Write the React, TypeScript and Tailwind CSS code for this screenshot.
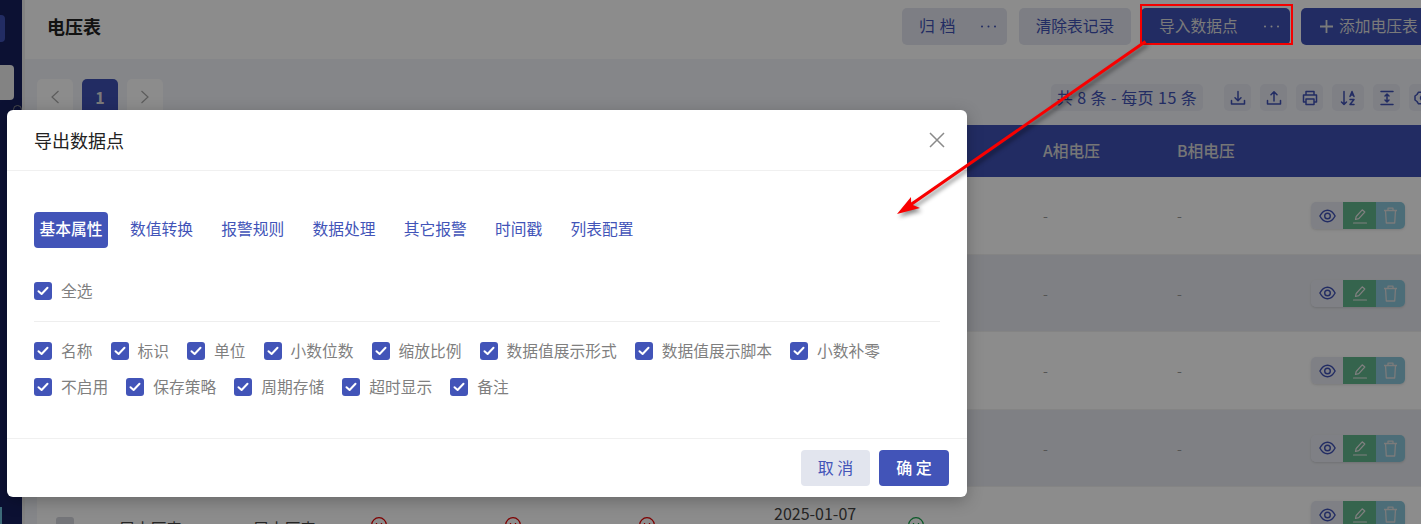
import React from "react";

const font = { fontFamily: '"Noto Sans CJK SC", "Noto Sans", sans-serif' };

const Check = () => (
  <span className="flex h-[18px] w-[18px] shrink-0 items-center justify-center rounded-[3px] bg-[#4254b8]">
    <svg width="12" height="10" viewBox="0 0 12 10" fill="none" stroke="white" strokeWidth="2" strokeLinecap="round" strokeLinejoin="round">
      <path d="M1.5 5.2 4.6 8 10.5 1.8" />
    </svg>
  </span>
);

const Item = ({ label }: { label: string }) => (
  <div className="flex h-[18px] items-center gap-[9px]">
    <Check />
    <span className="text-[15.75px] leading-[16px] whitespace-nowrap text-[#7f7f7f]">{label}</span>
  </div>
);

const Dots = ({ color }: { color: string }) => (
  <svg className="ml-auto mr-[11px] shrink-0" width="15" height="3" viewBox="0 0 15 3" fill={color}>
    <circle cx="1" cy="1.500" r="1" />
    <circle cx="7.500" cy="1.500" r="1" />
    <circle cx="14" cy="1.500" r="1" />
  </svg>
);

const Ico = ({ d }: { d: string }) => (
  <svg width="18" height="18" viewBox="0 0 18 18" fill="none" stroke="#3f51b5" strokeWidth="1.500" strokeLinecap="round" strokeLinejoin="round">
    <path d={d} />
  </svg>
);

const toolIcons = [
  "M9 2.500v9M6 8.800l3 3 3-3M2.500 11.500v3.500h13v-3.500",
  "M9 12V3M6 5.800l3-3 3 3M2.500 11.500v3.500h13v-3.500",
  "M5 6V2.500h8V6M5 13H2.500V6h13v7H13M5 10h8v5.500H5z",
  "M5 2.500v13M2.500 13l2.500 2.500L7.500 13M11 7.500l2-5 2 5M11.700 6h2.600M11 10.500h4L11 15.500h4",
  "M3 2.500h12M3 15.500h12M9 5v8M7 7l2-2 2 2M7 11l2 2 2-2",
  "M9 1.500 11 3.200h2.500L15 5.500l2 1.500v4l-2 1.500-1.500 2.300H11L9 16.500 7 14.800H4.500L3 12.500 1 11V7l2-1.500 1.500-2.300H7zM9 6.500a2.500 2.500 0 1 0 0 5 2.500 2.500 0 0 0 0-5z",
];

const Actions = () => (
  <div className="flex h-[27px] w-[94px] overflow-hidden rounded-[5px] shadow-sm">
    <span className="flex w-[32px] items-center justify-center bg-[#e7e9f3]">
      <svg width="17" height="14" viewBox="0 0 17 14" fill="none" stroke="#3f51b5" strokeWidth="1.400">
        <path d="M.9 7C3 3 5.500 1.200 8.500 1.200S14 3 16.100 7C14 11 11.500 12.800 8.500 12.800S3 11 .9 7Z" />
        <circle cx="8.500" cy="7" r="2.800" />
      </svg>
    </span>
    <span className="flex w-[33px] items-center justify-center bg-[#62b68c]">
      <svg width="16" height="16" viewBox="0 0 16 16" fill="none" stroke="#e8e8e8" strokeWidth="1.200" strokeLinejoin="round" strokeLinecap="round">
        <path d="M3.500 11.500 4.200 8.500 10.200 1.800 12.800 4 6.800 10.700ZM1.500 15h13" />
      </svg>
    </span>
    <span className="flex w-[29px] items-center justify-center bg-[#8ac6da]">
      <svg width="15" height="17" viewBox="0 0 15 17" fill="none" stroke="#e0e0e0" strokeWidth="1.300" strokeLinejoin="round">
        <path d="M1 3.500h13M5 3.500V1.200h5v2.300M2.500 3.500 3.300 16h8.400l.8-12.500" />
      </svg>
    </span>
  </div>
);

const Smile = ({ color }: { color: string }) => (
  <svg width="16" height="16" viewBox="0 0 16 16" fill="none" stroke={color} strokeWidth="1.300">
    <circle cx="8" cy="8" r="7.300" />
    <path d="M5.500 6v1M10.500 6v1M5 10c1.800 1.500 4.200 1.500 6 0" />
  </svg>
);

const Cols = "grid grid-cols-[72px_134px_117px_134px_134px_135px_134px_135px_134px_135px_120px]";

const Row = ({ dark, tall }: { dark?: boolean; tall?: boolean }) => (
  <div className={`${Cols} ${tall ? "h-[78px]" : "h-[77px]"} items-center border-b border-[#f0f0f0] ${dark ? "bg-[#e8eaf0]" : "bg-white"}`}>
    <span className="col-start-9 pl-[11px] text-[14px] text-[#9a9a9a]">-</span>
    <span className="pl-[11px] text-[14px] text-[#9a9a9a]">-</span>
    <span className="pl-[10px]"><Actions /></span>
  </div>
);

export default function App() {
  const row1 = ["名称", "标识", "单位", "小数位数", "缩放比例", "数据值展示形式", "数据值展示脚本", "小数补零"];
  const row2 = ["不启用", "保存策略", "周期存储", "超时显示", "备注"];
  const tabs = ["数值转换", "报警规则", "数据处理", "其它报警", "时间戳", "列表配置"];
  return (
    <div style={font} className="relative flex h-[524px] w-[1421px] overflow-hidden bg-white">
      {/* sidebar */}
      <aside className="flex w-[22px] shrink-0 flex-col bg-[#16205e] pt-[15px]">
        <div className="h-[27px] w-[5px] rounded-r-[4px] bg-[#3f51b5]" />
        <div className="mt-[23px] h-[35px] w-[14px] rounded-r-[4px] bg-[#eeeeee]" />
        <div className="ml-[13px] mt-[5px] h-[9px] w-[9px] rounded-full border border-[#888]" />
        <div className="mt-auto h-[17px] w-[2px] bg-[#6fc3dc]" />
      </aside>
      <div className="w-[3px] shrink-0 bg-[#ededed]" />

      <main className="flex min-w-0 flex-1 flex-col bg-[#f2f4fa]">
        <header className="flex h-[59px] shrink-0 items-start bg-white pl-[22px] pt-[8px]">
          <h1 className="text-[18px] leading-[37px] font-bold text-[#222]">电压表</h1>
          <div className="ml-auto mr-[-20px] flex h-[37px] shrink-0 items-stretch text-[15.75px] whitespace-nowrap">
            <div className="flex w-[105px] items-center rounded-[5px] bg-[#e3e6f0] pl-[17px] text-[#3f51b5]">
              <span className="pb-[2px] [word-spacing:1.500px]">归 档</span>
              <Dots color="#3f51b5" />
            </div>
            <div className="ml-[12px] flex w-[112px] items-center justify-center rounded-[5px] bg-[#e3e6f0] pb-[2px] text-[#3f51b5]">清除表记录</div>
            <div className="ml-[10px] flex w-[149px] items-center rounded-[5px] bg-[#3f51b5] pl-[18px] text-[#dedede]">
              <span className="pb-[2px]">导入数据点</span>
              <Dots color="#e8e8e8" />
            </div>
            <div className="ml-[11px] flex w-[140px] items-center rounded-[5px] bg-[#3f51b5] pl-[19px] text-[#dedede]">
              <svg width="13" height="13" viewBox="0 0 13 13" stroke="currentColor" strokeWidth="1.800" className="mr-[6px] shrink-0"><path d="M6.500 0v13M0 6.500h13" /></svg>
              <span className="pb-[2px]">添加电压表</span>
            </div>
          </div>
        </header>

        <div className="flex min-h-0 flex-1 flex-col pl-[12px]">
          <div className="flex h-[66px] shrink-0 pt-[20px]">
            <div className="flex h-[36px] gap-[9px]">
              <span className="flex w-[36px] items-center justify-center rounded-[5px] bg-white">
                <svg width="10" height="14" viewBox="0 0 10 14" fill="none" stroke="#a8a8a8" strokeWidth="1.200"><path d="M8.500 1 2 7l6.500 6" /></svg>
              </span>
              <span className="flex w-[36px] items-center justify-center rounded-[5px] bg-[#3f51b5] text-[16px] font-bold text-[#dedede]">1</span>
              <span className="flex w-[36px] items-center justify-center rounded-[5px] bg-white">
                <svg width="10" height="14" viewBox="0 0 10 14" fill="none" stroke="#a8a8a8" strokeWidth="1.200"><path d="M1.500 1 8 7l-6.500 6" /></svg>
              </span>
            </div>
            <div className="ml-auto mr-[-15px] mt-[5px] flex h-[27px] shrink-0 gap-[9px]">
              <span className="mr-[12px] flex w-[152px] items-center justify-center rounded-[5px] bg-[#e7e9f3] pb-[1px] text-[16px] tracking-[0.450px] whitespace-nowrap text-[#3f51b5]">共 8 条 - 每页 15 条</span>
              {toolIcons.map((d, i) => (
                <span key={i} className={`flex items-center justify-center rounded-[5px] bg-[#e7e9f3] ${i === 3 ? "w-[32px]" : "w-[27px]"}`}>
                  <Ico d={d} />
                </span>
              ))}
            </div>
          </div>

          <div className="min-h-0 flex-1">
            <div className={`${Cols} h-[52px] items-center bg-[#3f51b5] text-[15.75px] font-medium text-[#d8d8d8]`}>
              <span className="col-start-9 pl-[11px]">A相电压</span>
              <span className="pl-[11px]">B相电压</span>
            </div>
            <Row tall />
            <Row dark />
            <Row tall />
            <Row dark />
            <div className={`${Cols} h-[77px] items-start bg-white pt-[14px] text-[15.75px] text-[#444]`}>
              <span className="mt-[16px] ml-[19px] h-[18px] w-[18px] rounded-[3px] bg-[#d3d5dc]" />
              <span className="mt-[16px] pl-[10px]">居中压表</span>
              <span className="mt-[16px] pl-[10px]">居中压表</span>
              <span className="mt-[16px] pl-[11px]"><Smile color="#e60000" /></span>
              <span className="mt-[16px] pl-[11px]"><Smile color="#e60000" /></span>
              <span className="mt-[16px] pl-[11px]"><Smile color="#e60000" /></span>
              <span className="pl-[11px] text-[16px]">2025-01-07</span>
              <span className="mt-[16px] pl-[11px]"><Smile color="#16a34a" /></span>
              <span />
              <span />
              <span className="pl-[10px]"><Actions /></span>
            </div>
          </div>
        </div>
      </main>

      {/* mask */}
      <div className="absolute inset-0 bg-black/45" />

      {/* modal */}
      <div className="absolute left-[7px] top-[110px] flex h-[387px] w-[960px] flex-col rounded-[6px] bg-white shadow-[0_4px_16px_rgba(0,0,0,0.25)]">
        <div className="flex h-[61px] shrink-0 items-center border-b border-[#f0f0f0] px-[27px]">
          <span className="text-[18px] text-[#222]">导出数据点</span>
          <svg className="ml-auto mr-[-5px]" width="16" height="16" viewBox="0 0 16 16" stroke="#8a8a8a" strokeWidth="1.500"><path d="M1 1l14 14M15 1 1 15" /></svg>
        </div>
        <div className="flex-1 px-[27px] pt-[41px]">
          <div className="flex gap-[18.250px] text-[15.75px] text-[#4254b8]">
            <span className="mr-[-1.250px] flex h-[36px] w-[74px] items-center justify-center rounded-[4px] bg-[#4254b8] pb-[2px] font-medium text-white">基本属性</span>
            {tabs.map((t) => (
              <span key={t} className="flex h-[36px] items-center px-[5px] pb-[2px] whitespace-nowrap">{t}</span>
            ))}
          </div>
          <div className="mt-[34px]"><Item label="全选" /></div>
          <div className="mt-[21px] w-[906px] border-t border-[#eeeeee]" />
          <div className="mt-[20px] flex w-[906px] flex-wrap gap-x-[18px] gap-y-[18px]">
            {[...row1, ...row2].map((l) => <Item key={l} label={l} />)}
          </div>
        </div>
        <div className="flex h-[59px] shrink-0 items-center justify-end gap-[9px] border-t border-[#f0f0f0] pr-[18px]">
          <span className="flex h-[36px] w-[69px] items-center justify-center rounded-[4px] bg-[#e2e5ee] pb-[2px] text-[16px] text-[#4254b8]">取 消</span>
          <span className="flex h-[36px] w-[70px] items-center justify-center rounded-[4px] bg-[#4254b8] pb-[2px] text-[16px] font-medium text-white">确 定</span>
        </div>
      </div>

      {/* annotation */}
      <div className="absolute left-[1140px] top-[4px] h-[41px] w-[153px] border-2 border-[#f40000]" />
      <svg className="pointer-events-none absolute inset-0" width="1421" height="524" viewBox="0 0 1421 524" fill="#f80000" stroke="none">
        <path d="M1144.600 40.300 1146.400 42.700 912.900 204.900 920 208 897 214 911 197 911.100 202.500Z" style={{ filter: "drop-shadow(2px 3px 2px rgba(0,0,0,.45))" }} />
      </svg>
    </div>
  );
}
